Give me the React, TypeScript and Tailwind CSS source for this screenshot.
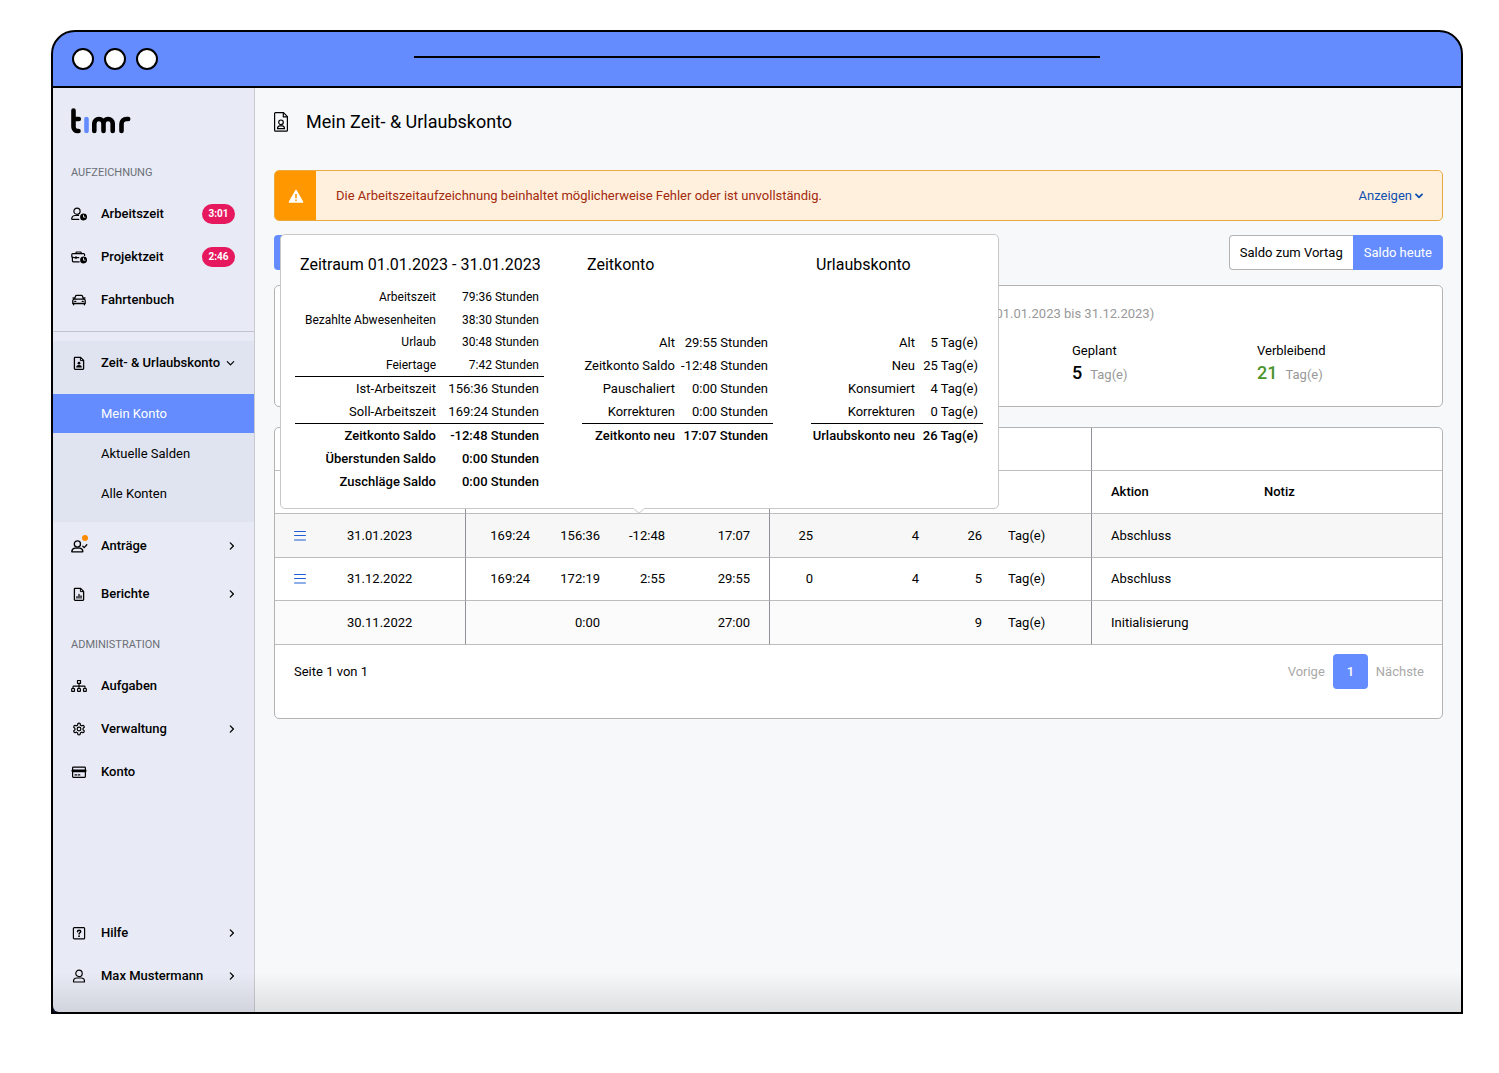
import type { ReactNode } from "react";

/* ---------- icons ---------- */

function Svg({ children, className = "size-4", box = "0 0 16 16", sw = 1.2 }: { children: ReactNode; className?: string; box?: string; sw?: number }) {
  return (
    <svg viewBox={box} className={className} fill="none" stroke="currentColor" strokeWidth={sw} strokeLinecap="round" strokeLinejoin="round" aria-hidden="true">
      {children}
    </svg>
  );
}

const Clock = () => (
  <>
    <circle cx="12.6" cy="11" r="3.5" fill="currentColor" stroke="none" />
    <path d="M12.5 9.2v2h1.6" stroke="#e8ebf5" strokeWidth="0.9" />
  </>
);

const UserClock = () => (
  <Svg>
    <circle cx="6" cy="5.2" r="3.1" />
    <path d="M7.8 13.4H1.4c-.5 0-.8-.4-.7-.9.3-2 1.6-3 3.4-3h3.5" />
    <Clock />
  </Svg>
);

const BriefcaseClock = () => (
  <Svg>
    <path d="M4.6 4.6 5.4 3h4.4l.8 1.6M.8 8V5.6c0-.6.4-1 1-1h10.8c.6 0 1 .4 1 1v.8M8.2 12.8H2.4c-.6 0-1-.4-1-1V8.6M.8 7.8l2.4.9h4.6M5 7.6v2" />
    <Clock />
  </Svg>
);

const Car = () => (
  <Svg sw={1.3}>
    <path d="M3.4 7.2 4.6 4c.2-.4.5-.6.9-.6h5c.4 0 .7.2.9.6l1.2 3.2M3.4 7.2h9.2c1 0 1.6.6 1.6 1.5v2.8H1.8V8.7c0-.9.6-1.5 1.6-1.5ZM2 5.9l1.6.4M14 5.9l-1.6.4M2.6 11.6v1.2M13.4 11.6v1.2M3.8 9.4h1M11.2 9.4h1" />
  </Svg>
);

const FileUser = () => (
  <Svg sw={1.3}>
    <path d="M4 2.4h5.6L12.6 5.4v8.2c0 .4-.3.7-.7.7H4.1c-.4 0-.7-.3-.7-.7V3c0-.4.2-.6.6-.6Z" />
    <path d="M9.4 2.6v3h3" strokeWidth="1" />
    <circle cx="8" cy="8.2" r="1.4" fill="currentColor" stroke="none" />
    <path d="M5.2 12.4c.1-1.6 1.2-2.4 2.8-2.4s2.7.8 2.8 2.4Z" fill="currentColor" stroke="none" />
  </Svg>
);

const UserCheck = () => (
  <span className="relative">
    <Svg className="h-4 w-[17px]" box="0 0 17 16" sw={1.3}>
      <circle cx="6.4" cy="6" r="3.1" />
      <path d="M1.2 13.9c-.3 0-.5-.2-.4-.6.3-2 1.4-3.2 3.4-3.2h4.4c2 0 3 1.2 3.3 3.2 0 .4-.2.6-.5.6Z" />
      <path d="m11.8 8.2 1.4 1.4 2.6-2.8" />
    </Svg>
    <span className="absolute -top-[3px] right-0 size-[6px] rounded-full bg-[#ff8c00]" />
  </span>
);

const FileChart = () => (
  <Svg sw={1.3}>
    <path d="M4 2.4h5.6L12.6 5.4v8.2c0 .4-.3.7-.7.7H4.1c-.4 0-.7-.3-.7-.7V3c0-.4.2-.6.6-.6Z" />
    <path d="M9.4 2.6v3h3" strokeWidth="1" />
    <path d="M6 12v-1.4M8 12V8.4M10 12V9.8" />
  </Svg>
);

const Tree = () => (
  <Svg sw={1.2}>
    <path d="M6.5 2.5h3v2.8h-3zM8 5.3v5M2 10.3V9c0-.5.3-.8.8-.8h10.4c.5 0 .8.3.8.8v1.3" />
    <rect x=".7" y="10.5" width="2.8" height="2.9" rx=".5" />
    <rect x="6.6" y="10.5" width="2.8" height="2.9" rx=".5" />
    <rect x="12.5" y="10.5" width="2.8" height="2.9" rx=".5" />
  </Svg>
);

const Gear = () => (
  <Svg className="size-[14px]" box="0 0 24 24" sw={2.1}>
    <path d="M12.22 2h-.44a2 2 0 0 0-2 2v.18a2 2 0 0 1-1 1.73l-.43.25a2 2 0 0 1-2 0l-.15-.08a2 2 0 0 0-2.73.73l-.22.38a2 2 0 0 0 .73 2.73l.15.1a2 2 0 0 1 1 1.72v.51a2 2 0 0 1-1 1.74l-.15.09a2 2 0 0 0-.73 2.73l.22.38a2 2 0 0 0 2.73.73l.15-.08a2 2 0 0 1 2 0l.43.25a2 2 0 0 1 1 1.73V20a2 2 0 0 0 2 2h.44a2 2 0 0 0 2-2v-.18a2 2 0 0 1 1-1.73l.43-.25a2 2 0 0 1 2 0l.15.08a2 2 0 0 0 2.73-.73l.22-.39a2 2 0 0 0-.73-2.73l-.15-.08a2 2 0 0 1-1-1.74v-.5a2 2 0 0 1 1-1.74l.15-.09a2 2 0 0 0 .73-2.73l-.22-.38a2 2 0 0 0-2.73-.73l-.15.08a2 2 0 0 1-2 0l-.43-.25a2 2 0 0 1-1-1.73V4a2 2 0 0 0-2-2z" />
    <circle cx="12" cy="12" r="3.2" />
  </Svg>
);

const Card = () => (
  <Svg>
    <rect x="1.6" y="3.1" width="12.8" height="10.3" rx=".8" />
    <path d="M1.8 6.8h12.4" strokeWidth="2.8" />
    <path d="M4 10.9h1.6M7.2 10.9h1.6" />
  </Svg>
);

const Help = () => (
  <Svg>
    <rect x="2.4" y="2.6" width="11.2" height="11.2" rx=".9" />
    <path d="M6.5 6.7c0-1 .7-1.5 1.6-1.5s1.6.5 1.6 1.4c0 1.1-1.6 1.2-1.6 2.3" strokeWidth="1.5" />
    <circle cx="8.05" cy="11.2" r=".9" fill="currentColor" stroke="none" />
  </Svg>
);

const Person = () => (
  <Svg>
    <circle cx="8" cy="5.4" r="3.2" />
    <path d="M3 14c-.3 0-.5-.2-.5-.6 0-2.2 1.4-3.4 3.3-3.4h4.4c1.9 0 3.3 1.2 3.3 3.4 0 .4-.2.6-.5.6Z" />
  </Svg>
);

const ChevronRight = () => (
  <Svg className="size-[10px]" box="0 0 10 10" sw={1.3}>
    <path d="m5.3 1.9 3.1 3.1-3.1 3.1" />
  </Svg>
);

const ChevronDown = () => (
  <Svg className="size-[10px]" box="0 0 10 10" sw={1.2}>
    <path d="m2.3 3.6 3.2 3.2 3.2-3.2" />
  </Svg>
);

const MenuLines = () => (
  <Svg className="size-3" box="0 0 12 12" sw={1.2}>
    <path d="M.6 1.5h10.8M.6 5.5h10.8M.6 10h10.8" />
  </Svg>
);

const Logo = () => (
  <svg viewBox="0 0 60 26" className="h-[26px] w-[60px]" fill="none" stroke="#000" strokeWidth="4.6" strokeLinecap="round" strokeLinejoin="round" role="img" aria-label="timr">
    <path d="M2.5 2.5V19a4 4 0 0 0 4 4h1M2.5 11h5.3" />
    <path d="M15.5 11v12" stroke="#648cff" />
    <path d="M23.3 23v-7.4a4.6 4.6 0 0 1 9.2 0V23M32.5 15.6a4.6 4.6 0 0 1 9.2 0V23" />
    <path d="M50.5 23v-7a5 5 0 0 1 5-5h1.7" />
  </svg>
);

/* ---------- sidebar ---------- */

function NavItem({ icon, label, badge, chevron, tall }: { icon: ReactNode; label: string; badge?: string; chevron?: "right" | "down"; tall?: string }) {
  return (
    <a href="#" className={`flex items-center pr-[19px] pl-[18px] font-medium ${tall ?? "h-[43px]"}`}>
      <span className="flex w-[30px] shrink-0">
        <span className="flex w-4 justify-center">{icon}</span>
      </span>
      <span className="grow whitespace-nowrap">{label}</span>
      {badge && <span className="flex h-5 w-[33px] items-center justify-center rounded-full bg-[#e6195f] text-[10px] font-bold text-white">{badge}</span>}
      {chevron === "right" && <ChevronRight />}
      {chevron === "down" && <ChevronDown />}
    </a>
  );
}

function Sidebar() {
  return (
    <nav className="flex w-[202px] shrink-0 flex-col border-r border-[#c8cad0] bg-[#e8ebf5] pb-[15px]">
      <a href="#" className="mt-5 ml-[18px] w-fit">
        <Logo />
      </a>
      <h2 className="mt-[31px] mb-[11px] pl-[18px] text-[11px] leading-4 text-[#6b6e76]">AUFZEICHNUNG</h2>
      <NavItem icon={<UserClock />} label="Arbeitszeit" badge="3:01" />
      <NavItem icon={<BriefcaseClock />} label="Projektzeit" badge="2:46" />
      <NavItem icon={<Car />} label="Fahrtenbuch" />
      <hr className="mt-[10px] mb-[9px] border-[#bfc4cd]" />
      <div className="bg-[#e0e4f0] pb-[9px]">
        <NavItem icon={<FileUser />} label="Zeit- & Urlaubskonto" chevron="down" tall="h-11" />
        <div className="mt-[9px] flex flex-col gap-px">
          <a href="#" className="flex h-[39px] items-center bg-[#648cff] pl-12 text-white">Mein Konto</a>
          <a href="#" className="flex h-[39px] items-center pl-12">Aktuelle Salden</a>
          <a href="#" className="flex h-[39px] items-center pl-12">Alle Konten</a>
        </div>
      </div>
      <NavItem icon={<UserCheck />} label="Anträge" chevron="right" tall="h-12" />
      <NavItem icon={<FileChart />} label="Berichte" chevron="right" tall="h-12" />
      <h2 className="mt-[19px] mb-[11px] pl-[18px] text-[11px] leading-4 text-[#6b6e76]">ADMINISTRATION</h2>
      <NavItem icon={<Tree />} label="Aufgaben" />
      <NavItem icon={<Gear />} label="Verwaltung" chevron="right" />
      <NavItem icon={<Card />} label="Konto" />
      <div className="mt-auto">
        <NavItem icon={<Help />} label="Hilfe" chevron="right" />
        <NavItem icon={<Person />} label="Max Mustermann" chevron="right" />
      </div>
    </nav>
  );
}

/* ---------- popover ---------- */

type Row = { label: string; value: string; kind?: "small" | "bold"; rule?: boolean; h?: string };

const period: Row[] = [
  { label: "Arbeitszeit", value: "79:36 Stunden", kind: "small", h: "h-[22px]" },
  { label: "Bezahlte Abwesenheiten", value: "38:30 Stunden", kind: "small" },
  { label: "Urlaub", value: "30:48 Stunden", kind: "small", h: "h-[22px]" },
  { label: "Feiertage", value: "7:42 Stunden", kind: "small" },
  { label: "Ist-Arbeitszeit", value: "156:36 Stunden", rule: true },
  { label: "Soll-Arbeitszeit", value: "169:24 Stunden" },
  { label: "Zeitkonto Saldo", value: "-12:48 Stunden", kind: "bold", rule: true },
  { label: "Überstunden Saldo", value: "0:00 Stunden", kind: "bold" },
  { label: "Zuschläge Saldo", value: "0:00 Stunden", kind: "bold" },
];

const timeAccount: Row[] = [
  { label: "Alt", value: "29:55 Stunden" },
  { label: "Zeitkonto Saldo", value: "-12:48 Stunden" },
  { label: "Pauschaliert", value: "0:00 Stunden" },
  { label: "Korrekturen", value: "0:00 Stunden" },
  { label: "Zeitkonto neu", value: "17:07 Stunden", kind: "bold", rule: true },
];

const vacationAccount: Row[] = [
  { label: "Alt", value: "5 Tag(e)" },
  { label: "Neu", value: "25 Tag(e)" },
  { label: "Konsumiert", value: "4 Tag(e)" },
  { label: "Korrekturen", value: "0 Tag(e)" },
  { label: "Urlaubskonto neu", value: "26 Tag(e)", kind: "bold", rule: true },
];

function Summary({ title, rows, width, labelWidth, offset }: { title: string; rows: Row[]; width: string; labelWidth: string; offset: string }) {
  return (
    <section className={width}>
      <h3 className="pl-[5px] text-base leading-6 whitespace-nowrap">{title}</h3>
      <table className={`w-full table-fixed border-separate border-spacing-0 text-right leading-4 ${offset}`}>
        <colgroup>
          <col className={labelWidth} />
          <col />
        </colgroup>
        <tbody>
          {rows.map((r) => (
            <tr
              key={r.label}
              className={`${r.rule ? "h-6" : r.h ?? "h-[23px]"} ${r.kind === "small" ? "text-[12px]" : "text-[13px]"} ${r.kind === "bold" ? "font-medium" : "font-normal"}`}
            >
              <th scope="row" className={`p-0 pr-[5px] text-right whitespace-nowrap [font-weight:inherit] ${r.rule ? "border-t border-black" : ""}`}>{r.label}</th>
              <td className={`p-0 pr-[5px] whitespace-nowrap ${r.rule ? "border-t border-black" : ""}`}>{r.value}</td>
            </tr>
          ))}
        </tbody>
      </table>
    </section>
  );
}

function Popover() {
  return (
    <div role="tooltip" className="absolute top-[146px] left-[25px] flex gap-[38px] rounded-[5px] border border-[#c8c8c8] bg-white pt-[18px] pr-[15px] pb-[15px] pl-[14px]">
      <Summary title="Zeitraum 01.01.2023 - 31.01.2023" rows={period} width="w-[249px]" labelWidth="w-[146px]" offset="mt-[9px]" />
      <Summary title="Zeitkonto" rows={timeAccount} width="w-[191px]" labelWidth="w-[98px]" offset="mt-[54px]" />
      <Summary title="Urlaubskonto" rows={vacationAccount} width="w-[172px]" labelWidth="w-[109px]" offset="mt-[54px]" />
      <svg viewBox="0 0 12 6" className="absolute top-full left-[352px] h-[6px] w-3" aria-hidden="true">
        <path d="M0 0h12L6 5.2z" fill="#fff" />
        <path d="M.5.5 6 5.2 11.5.5" fill="none" stroke="#c8c8c8" />
      </svg>
    </div>
  );
}

/* ---------- main ---------- */

const entries = [
  { menu: true, date: "31.01.2023", nums: ["169:24", "156:36", "-12:48", "17:07", "25", "4", "26"], action: "Abschluss", cls: "h-11 bg-[#f7f7f7]" },
  { menu: true, date: "31.12.2022", nums: ["169:24", "172:19", "2:55", "29:55", "0", "4", "5"], action: "Abschluss", cls: "h-[43px] bg-white" },
  { menu: false, date: "30.11.2022", nums: ["", "0:00", "", "27:00", "", "", "9"], action: "Initialisierung", cls: "h-11 bg-[#fbfbfb]" },
];

const cell = "border-b border-[#bdbdbd] p-0";
const divide = "border-r border-r-[#8f9399]";

function Ledger() {
  return (
    <section className="mt-5 overflow-hidden rounded-[5px] border border-[#b3b3b3] bg-white">
      <table className="w-full table-fixed border-separate border-spacing-0 leading-4">
        <colgroup>
          <col className="w-[52px]" />
          <col className="w-[139px]" />
          <col className="w-[74px]" />
          <col className="w-[70px]" />
          <col className="w-[65px]" />
          <col className="w-[95px]" />
          <col className="w-[53px]" />
          <col className="w-[106px]" />
          <col className="w-[63px]" />
          <col className="w-[100px]" />
          <col className="w-[153px]" />
          <col />
        </colgroup>
        <thead>
          <tr className="h-[43px]">
            <td colSpan={2} className={`${cell} ${divide}`} />
            <td colSpan={4} className={`${cell} ${divide}`} />
            <td colSpan={4} className={`${cell} ${divide}`} />
            <td colSpan={2} className={cell} />
          </tr>
          <tr className="h-[43px] text-left">
            <td colSpan={2} className={`${cell} ${divide}`} />
            <td colSpan={4} className={`${cell} ${divide}`} />
            <td colSpan={4} className={`${cell} ${divide}`} />
            <th scope="col" className={`${cell} pl-[19px] font-medium`}>Aktion</th>
            <th scope="col" className={`${cell} pl-[19px] font-medium`}>Notiz</th>
          </tr>
        </thead>
        <tbody>
          {entries.map((e) => (
            <tr key={e.date} className={e.cls}>
              <td className={cell}>
                {e.menu && (
                  <button type="button" aria-label="Details" className="ml-[19px] block text-[#1f5fd6]">
                    <MenuLines />
                  </button>
                )}
              </td>
              <td className={`${cell} ${divide} pl-5`}>{e.date}</td>
              {e.nums.map((n, i) => (
                <td key={i} className={`${cell} text-right ${i === 3 ? `${divide} pr-[19px]` : "pr-[10px]"}`}>{n}</td>
              ))}
              <td className={`${cell} ${divide} pl-4`}>Tag(e)</td>
              <td className={`${cell} pl-[19px]`}>{e.action}</td>
              <td className={cell} />
            </tr>
          ))}
        </tbody>
      </table>
      <div className="flex items-center justify-between pt-[9px] pr-[18px] pb-[29px] pl-[19px]">
        <span>Seite 1 von 1</span>
        <div className="flex items-center gap-2 text-[#a9a9a9]">
          <button type="button" disabled>Vorige</button>
          <button type="button" className="size-[35px] rounded bg-[#648cff] font-medium text-white">1</button>
          <button type="button" disabled>Nächste</button>
        </div>
      </div>
    </section>
  );
}

function Main() {
  return (
    <main className="relative min-w-0 grow bg-[#f7f8fa] pr-[18px] pl-[19px]">
      <header className="flex h-[82px] items-start pt-[22px]">
        <Svg className="mt-[2px] h-5 w-[14px]" box="0 0 14 20" sw={1.2}>
          <path d="M1.6.7h7.9l3.9 3.9v13.7c0 .5-.4.9-.9.9h-11c-.5 0-.9-.4-.9-.9V1.6c0-.5.4-.9.9-.9Z" />
          <path d="M9.3.9v3.9h3.9" />
          <circle cx="7" cy="10.3" r="2.3" />
          <path d="M3.5 16.7c0-1.9 1-2.9 2.4-2.9h2.2c1.4 0 2.4 1 2.4 2.9Z" />
        </Svg>
        <h1 className="ml-[18px] text-lg leading-6">Mein Zeit- &amp; Urlaubskonto</h1>
      </header>

      <div role="alert" className="flex h-[51px] items-center overflow-hidden rounded-[5px] border border-[#eba93f] bg-[#fff0de]">
        <span className="flex w-[41px] items-center justify-center self-stretch bg-[#ff9800]">
          <svg viewBox="0 0 16 14" className="h-[14px] w-4" aria-hidden="true">
            <path d="M8 .9 15 13.2H1Z" fill="#fff" stroke="#fff" strokeLinejoin="round" />
            <path d="M8 5v4.2M8 10.6v1.5" stroke="#ff9800" strokeWidth="1.6" />
          </svg>
        </span>
        <p className="grow pl-5 text-[#a32a0c]">Die Arbeitszeitaufzeichnung beinhaltet möglicherweise Fehler oder ist unvollständig.</p>
        <button type="button" className="mr-[19px] flex items-center gap-[3px] text-[#0f4faf]">
          Anzeigen
          <Svg className="h-2 w-2" box="0 0 8 8" sw={1.8}>
            <path d="M1 2.4 4 5.4l3-3" />
          </Svg>
        </button>
      </div>

      <div className="mt-[14px] flex h-[35px] justify-between">
        <button type="button" aria-label="Zeitkonto" className="w-32 rounded bg-[#648cff]" />
        <div className="flex">
          <button type="button" className="rounded-l border border-r-0 border-[#b3b3b3] bg-white px-[10px]">Saldo zum Vortag</button>
          <button type="button" className="rounded-r bg-[#648cff] px-[11px] text-white">Saldo heute</button>
        </div>
      </div>

      <section className="mt-[15px] flex h-[122px] justify-end rounded-[5px] border border-[#b3b3b3] bg-white">
        <div className="w-[451px] pt-[17px]">
          <h2 className="text-[13px] leading-[22px] text-[#999]">(01.01.2023 bis 31.12.2023)</h2>
          <dl className="mt-4 flex pl-[81px]">
            <div className="w-[185px]">
              <dt className="leading-5">Geplant</dt>
              <dd className="flex items-baseline gap-2 leading-6 text-[#999]">
                <strong className="text-lg leading-6 font-medium text-black">5</strong>Tag(e)
              </dd>
            </div>
            <div>
              <dt className="leading-5">Verbleibend</dt>
              <dd className="flex items-baseline gap-2 leading-6 text-[#999]">
                <strong className="text-lg leading-6 font-medium text-[#4c942c]">21</strong>Tag(e)
              </dd>
            </div>
          </dl>
        </div>
      </section>

      <Ledger />
      <Popover />
    </main>
  );
}

export default function App() {
  return (
    <div className="flex min-h-screen flex-col bg-white pt-[30px] pr-9 pb-[59px] pl-[51px] font-['Roboto',sans-serif] text-[13px] text-black">
      <div className="grid h-[58px] grid-cols-[1fr_49%_1fr] items-center rounded-t-[24px] border-2 border-black bg-[#648cff]">
        <div className="flex gap-[10px] pl-[19px]">
          <span className="size-[22px] rounded-full border-2 border-black bg-white" />
          <span className="size-[22px] rounded-full border-2 border-black bg-white" />
          <span className="size-[22px] rounded-full border-2 border-black bg-white" />
        </div>
        <div className="mx-[2px] mb-1 h-[2px] bg-black" />
      </div>
      <div className="flex grow border-2 border-t-0 border-black bg-[#12132e]">
        <div className="relative flex grow overflow-hidden rounded-bl-md">
          <Sidebar />
          <Main />
          <div className="pointer-events-none absolute inset-x-0 bottom-0 h-10 bg-linear-to-b from-transparent to-black/10" />
        </div>
      </div>
    </div>
  );
}
